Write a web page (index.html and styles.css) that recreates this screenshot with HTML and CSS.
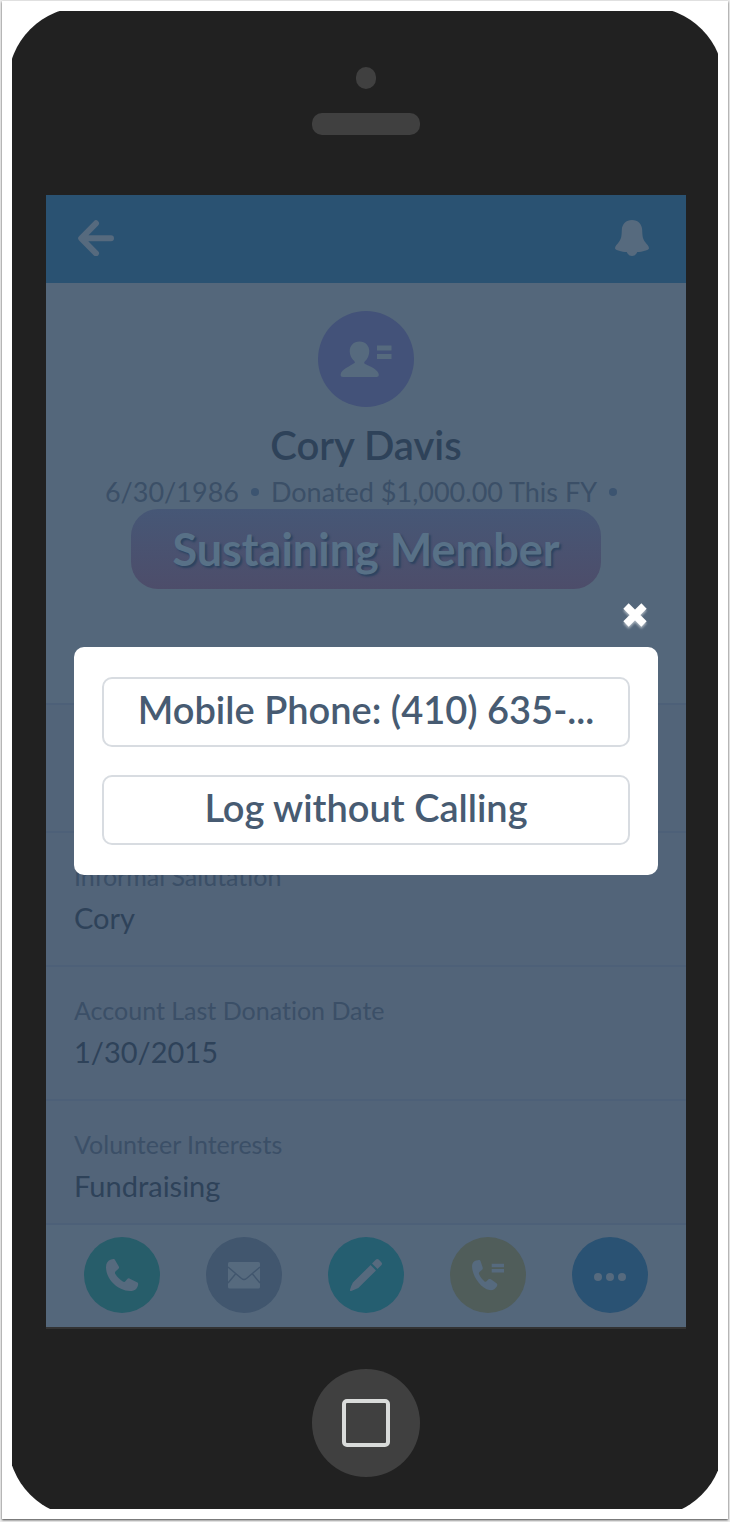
FILE: index.html
```
<!DOCTYPE html>
<html lang="en">
<head>
<meta charset="utf-8">
<meta name="viewport" content="width=device-width, initial-scale=1">
<title>Cory Davis</title>
<link rel="stylesheet" href="styles.css">
</head>
<body>
<main class="frame">
  <div class="phone">
    <div class="shell">
      <div class="camera"></div>
      <div class="speaker"></div>

      <div class="screen">
        <header class="topbar">
          <button class="icon-button" type="button" aria-label="Back">
            <svg width="36" height="36" viewBox="0 0 36 36" fill="none" stroke="currentColor" stroke-width="6" stroke-linecap="round" stroke-linejoin="round"><path d="M33 18.3H4M18 3.300L3.200 18.300L18 33.300"/></svg>
          </button>
          <button class="icon-button" type="button" aria-label="Notifications">
            <svg width="36" height="36" viewBox="0 0 36 36" fill="currentColor"><path d="M18 0C24 0 28 4 28.200 10C28.400 16.500 28.800 19 31.500 22.500C33 24.500 35 26 35 28.300C35 30.500 28 31.800 23.300 32.100C22.500 34.500 20.500 36 18 36C15.500 36 13.500 34.500 12.700 32.100C8 31.800 1 30.500 1 28.300C1 26 3 24.500 4.500 22.500C7.200 19 7.600 16.500 7.800 10C8 4 12 0 18 0Z"/></svg>
          </button>
        </header>

        <section class="profile">
          <div class="avatar">
            <svg width="96" height="96" viewBox="0 0 96 96" fill="currentColor"><path d="M41.500 30.500C47.300 30.500 51.300 34.500 51.300 40.200C51.300 44 49.500 48 46.800 50.500C45.800 51.800 46 52.300 47.200 52.900C52 55.300 60.500 58.500 60.800 63.500C60.900 65.200 60 66 58.500 66H25C23.300 66 22.500 65.200 22.600 63.500C23 58.500 32 55.300 36.800 51.800C37 51.300 36.800 50.800 36.200 50C33.500 47.500 31.700 44 31.700 40.200C31.700 34.500 35.700 30.500 41.500 30.500Z"/><path d="M59 34.500h14.500v5H59zM59 43h14.500v5H59z"/></svg>
          </div>
          <h1 class="name">Cory Davis</h1>
          <p class="facts"><span>6/30/1986</span><i class="dot"></i><span>Donated $1,000.00 This FY</span><i class="dot"></i></p>
          <div class="badge">Sustaining Member</div>
        </section>

        <dl class="fields">
          <div class="field field-empty"></div>
          <div class="field"><dt>Informal Salutation</dt><dd>Cory</dd></div>
          <div class="field"><dt>Account Last Donation Date</dt><dd>1/30/2015</dd></div>
          <div class="field"><dt>Volunteer Interests</dt><dd>Fundraising</dd></div>
        </dl>

        <nav class="actions">
          <button class="action call" type="button" aria-label="Call">
            <svg viewBox="0 0 76 76" fill="currentColor"><path d="M27 22.600C29.500 21.600 30.500 22 31.300 23.500L34.800 29.600C35.300 30.600 35 31.300 34.200 32L31.700 34.200C30.700 35.100 30.700 36 31.500 37.300C33.500 40.300 36 42.700 38.800 44.500C40 45.200 40.800 45 41.600 44L43.300 42C44 41.200 44.800 41.200 45.800 41.700L53 45.300C54.200 46 54.400 46.700 54 48.200C52.800 52.300 50.300 54 46 54C33 53.500 21.800 41.500 22 30C22.100 26.200 23.800 23.700 27 22.600Z"/></svg>
          </button>
          <button class="action mail" type="button" aria-label="Email">
            <svg viewBox="0 0 76 76"><rect x="22" y="25" width="32" height="26.500" rx="1.500" fill="currentColor"/><path d="M22 30L35.500 41.500Q38 43.500 40.500 41.500L54 30M22 46L29.500 37M54 46L46.500 37" fill="none" stroke="#41566e" stroke-width="1.400"/></svg>
          </button>
          <button class="action edit" type="button" aria-label="Edit">
            <svg viewBox="0 0 76 76" fill="currentColor"><path d="M42.600 28L48 33.400L30.300 51Q28 52.200 23.300 54Q21.800 54.400 22 52.800Q23.500 48 24.900 45.600ZM44 26.600L47.700 22.800Q49.200 21.300 50.700 22.600L53.500 25.400Q54.700 26.800 53.300 28.200L49.500 32Z"/></svg>
          </button>
          <button class="action log" type="button" aria-label="Log a call">
            <svg viewBox="0 0 76 76" fill="currentColor"><path d="M26 23.600C28.800 22.500 30.200 22.700 30.600 24.200L32.700 30.400C33 31.500 32.700 32.300 31.800 33L29.500 34.900C28.700 35.600 28.700 36.500 29.200 37.500C30.500 40.300 32.300 42.500 34.300 44.200C35.300 45 36 44.800 36.800 43.900L38.500 42.300C39.300 41.700 40 41.800 40.900 42.300L46.500 46.300C47.500 47 47.500 48 46.900 49.200C45 52.500 43 53.400 39.500 53.100C30.500 51.500 22 38.500 22 29C22.100 26.500 23.500 24.500 26 23.600Z"/><path d="M41.700 26.700H54v3.500H41.700zM41.700 32H54v3.500H41.700z"/></svg>
          </button>
          <button class="action more" type="button" aria-label="More">
            <svg viewBox="0 0 76 76" fill="currentColor"><circle cx="26" cy="40" r="4"/><circle cx="38" cy="40" r="4"/><circle cx="50" cy="40" r="4"/></svg>
          </button>
        </nav>

        <div class="overlay">
          <div class="dialog" role="dialog" aria-label="Call options">
            <button class="close" type="button" aria-label="Close">
              <svg width="34" height="34" viewBox="0 0 34 34" stroke="currentColor" stroke-width="7.500"><path d="M8 8L26 26M26 8L8 26"/></svg>
            </button>
            <button class="choice" type="button">Mobile Phone: (410) 635-...</button>
            <button class="choice" type="button">Log without Calling</button>
          </div>
        </div>
      </div>

      <button class="home" type="button" aria-label="Home"><span class="home-mark"></span></button>
    </div>
  </div>
</main>
</body>
</html>
```
FILE: styles.css
```
* {
  box-sizing: border-box;
}

body {
  margin: 0;
  padding: 1px 2px 3px;
  background: #ececec;
  font-family: Lato, "Open Sans", sans-serif;
  font-variant-ligatures: none;
  color: #2e4259;
}

button {
  margin: 0;
  padding: 0;
  border: 0;
  background: none;
  font: inherit;
  color: inherit;
}

svg {
  display: block;
}

.frame {
  padding: 10px;
  background: #fff;
  box-shadow: 0 1px 2px rgba(0, 0, 0, 0.7);
}

.phone {
  display: flow-root;
  overflow: hidden;
}

.shell {
  display: flex;
  flex-direction: column;
  align-items: center;
  margin: -4px -6px -8px -4px;
  padding: 60px 38px 40px;
  border-radius: 76px;
  background: #212121;
}

.camera {
  width: 20px;
  height: 22px;
  border-radius: 10px;
  background: #404040;
}

.speaker {
  width: 108px;
  height: 22px;
  margin: 24px 0 60px;
  border-radius: 10px;
  background: #404040;
}

.screen {
  position: relative;
  width: 100%;
  border-bottom: 2px solid #333;
  background: #54677b;
}

.topbar {
  display: flex;
  align-items: center;
  justify-content: space-between;
  height: 88px;
  padding: 0 36px 2px 32px;
  background: #2a5272;
}

.icon-button,
.avatar,
.action {
  color: #566a7e;
}

.profile {
  display: flex;
  flex-direction: column;
  align-items: center;
  min-height: 420px;
  padding: 28px 24px;
}

.avatar {
  width: 96px;
  height: 96px;
  border-radius: 50%;
  background: #435279;
}

.name {
  margin: 15px 0 0;
  font-size: 40px;
  line-height: 46px;
  font-weight: 600;
}

.facts {
  display: flex;
  align-items: center;
  gap: 12px;
  margin: 7px 0 0;
  padding-right: 10px;
  font-size: 27px;
  line-height: 34px;
  color: #3b4f67;
}

.dot {
  width: 8px;
  height: 8px;
  border-radius: 50%;
  background: #3c5470;
}

.badge {
  width: 470px;
  max-width: 100%;
  border-radius: 27px;
  background: linear-gradient(#465776, #4d4d6a);
  font-size: 45px;
  line-height: 80px;
  font-weight: 700;
  text-align: center;
  color: #587187;
  text-shadow: 2px 2px 2px #2c4360;
}

.fields {
  margin: 0;
  background: #526479;
}

.field {
  padding: 28px 28px 20px;
  border-top: 2px solid #4d6078;
}

.field-empty {
  height: 128px;
}

.field:last-child {
  padding-bottom: 10px;
}

.field dt {
  font-size: 25px;
  line-height: 30px;
  color: #3b4f67;
}

.field dd {
  margin: 0;
  font-size: 29px;
  line-height: 54px;
}

.actions {
  display: flex;
  justify-content: center;
  gap: 46px;
  padding: 12px 0 14px;
  border-top: 2px solid #4d6078;
}

.action {
  width: 76px;
  height: 76px;
  border-radius: 50%;
}

.call {
  background: #275d6a;
}

.mail {
  background: #41566e;
}

.edit {
  background: #255e70;
}

.log {
  background: #505d5a;
}

.more {
  background: #2a5273;
}

.overlay {
  position: absolute;
  inset: 0;
  display: flex;
  align-items: center;
  padding: 0 28px;
}

.dialog {
  position: relative;
  display: flex;
  flex: 1;
  flex-direction: column;
  gap: 28px;
  min-width: 0;
  padding: 30px 28px;
  border-radius: 10px;
  background: #fff;
}

.close {
  position: absolute;
  right: 6px;
  bottom: 100%;
  padding-bottom: 15px;
  color: #fff;
  filter: drop-shadow(0 2px 1px rgba(255, 255, 255, 0.5));
}

.choice {
  height: 70px;
  padding: 0 30px 6px;
  overflow: hidden;
  border: 2px solid #d8dce1;
  border-radius: 10px;
  font-size: 38px;
  font-weight: 600;
  white-space: nowrap;
  text-overflow: ellipsis;
  color: #475b72;
}

.home {
  display: grid;
  place-items: center;
  width: 108px;
  height: 108px;
  margin-top: 40px;
  border-radius: 50%;
  background: #404040;
}

.home-mark {
  width: 48px;
  height: 48px;
  border: 4px solid #d9dbda;
  border-radius: 5px;
}
```
